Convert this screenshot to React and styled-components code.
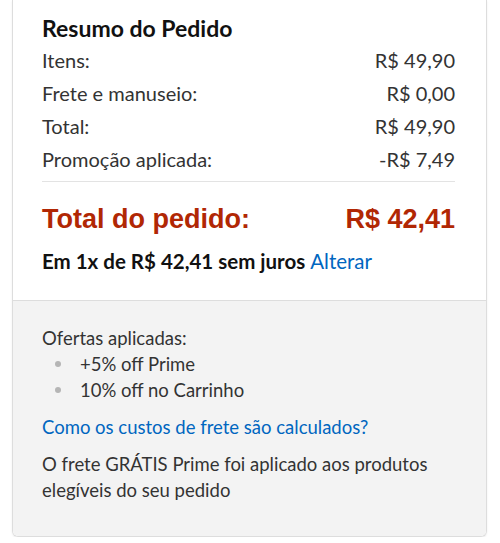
import React from 'react';
import styled, { createGlobalStyle } from 'styled-components';

const GlobalStyle = createGlobalStyle`
  body {
    margin: 0;
    background: #fff;
    font-family: Lato, "Open Sans", Arial, sans-serif;
  }
`;

const Page = styled.div`
  padding: 0 13px 0 12px;
  width: 500px;
  box-sizing: border-box;
`;

const Card = styled.div`
  border: 1px solid #dddddd;
  border-top: none;
  border-radius: 0 0 6px 6px;
  box-shadow: 0 1px 2px rgba(0, 0, 0, 0.08);
  overflow: hidden;
`;

const Summary = styled.div`
  padding: 14px 31px 26px 29px;
  border-bottom: 1px solid #dddddd;
  background: #fff;
`;

const Title = styled.h2`
  margin: 0 0 2px;
  font-size: 23px;
  line-height: 28px;
  font-weight: 700;
  color: #111;
`;

const Row = styled.div`
  display: flex;
  justify-content: space-between;
  font-size: 20px;
  line-height: 33px;
  color: #333;
`;

const Divider = styled.hr`
  border: none;
  border-top: 1px solid #e3e3e3;
  margin: 5px 0 22px;
`;

const TotalRow = styled.div`
  display: flex;
  justify-content: space-between;
  font-family: "Liberation Sans", Arial, sans-serif;
  font-weight: 700;
  font-size: 27px;
  line-height: 30px;
  color: #b12704;
`;

const Installments = styled.div`
  margin-top: 14px;
  font-size: 20.5px;
  line-height: 26px;
  font-weight: 700;
  color: #111;
`;

const Link = styled.a`
  color: #0066c0;
  font-weight: 400;
  text-decoration: none;
`;

const Offers = styled.div`
  padding: 24px 29px 33px 29px;
  background: #f3f3f3;
  font-size: 18.5px;
  line-height: 26px;
  color: #333;
`;

const BulletList = styled.ul`
  margin: 0;
  padding: 0;
  list-style: none;
`;

const Bullet = styled.li`
  display: flex;
  align-items: center;
  &::before {
    content: '';
    width: 6px;
    height: 6px;
    border-radius: 50%;
    background: #b5b5b5;
    margin: 0 19px 0 13px;
  }
`;

const Para = styled.p`
  margin: 11px 0 0;
`;

const rows = [
  ['Itens:', 'R$ 49,90'],
  ['Frete e manuseio:', 'R$ 0,00'],
  ['Total:', 'R$ 49,90'],
  ['Promoção aplicada:', '-R$ 7,49'],
];

export default function App() {
  return (
    <Page>
      <GlobalStyle />
      <Card>
        <Summary>
          <Title>Resumo do Pedido</Title>
          {rows.map(([label, value]) => (
            <Row key={label}>
              <span>{label}</span>
              <span>{value}</span>
            </Row>
          ))}
          <Divider />
          <TotalRow>
            <span>Total do pedido:</span>
            <span>R$ 42,41</span>
          </TotalRow>
          <Installments>
            Em 1x de R$ 42,41 sem juros <Link href="#">Alterar</Link>
          </Installments>
        </Summary>
        <Offers>
          <div>Ofertas aplicadas:</div>
          <BulletList>
            <Bullet>+5% off Prime</Bullet>
            <Bullet>10% off no Carrinho</Bullet>
          </BulletList>
          <Para>
            <Link href="#">Como os custos de frete são calculados?</Link>
          </Para>
          <Para>
            O frete GRÁTIS Prime foi aplicado aos produtos elegíveis do seu pedido
          </Para>
        </Offers>
      </Card>
    </Page>
  );
}
